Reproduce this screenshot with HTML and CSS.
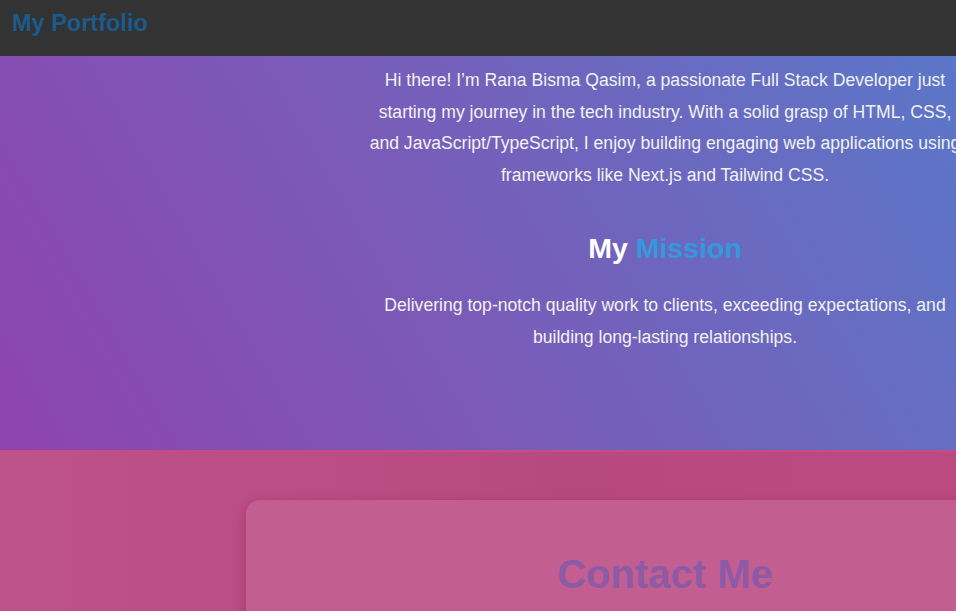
FILE: index.html
```html
<!DOCTYPE html>
<html lang="en">
<head>
<meta charset="utf-8">
<title>My Portfolio</title>
<link rel="stylesheet" href="styles.css">
</head>
<body>
<header class="topbar">
  <h1 class="logo">My Portfolio</h1>
</header>
<section class="hero">
  <div class="hero-col">
    <p class="intro">Hi there! I’m Rana Bisma Qasim, a passionate Full Stack Developer just starting my journey in the tech industry. With a solid grasp of HTML, CSS, and JavaScript/TypeScript, I enjoy building engaging web applications using frameworks like Next.js and Tailwind CSS.</p>
    <h2 class="mission-title">My <span class="accent">Mission</span></h2>
    <p class="intro">Delivering top-notch quality work to clients, exceeding expectations, and building long-lasting relationships.</p>
  </div>
</section>
<section class="contact">
  <div class="card">
    <h2 class="card-title">Contact Me</h2>
  </div>
</section>
</body>
</html>
```
FILE: styles.css
```css
* { box-sizing: border-box; }
html, body {
  margin: 0;
  padding: 0;
  width: 956px;
  height: 611px;
  overflow: hidden;
  font-family: "Liberation Sans", Arial, sans-serif;
}
.topbar {
  height: 56px;
  background: #333333;
  display: flex;
  align-items: center;
  padding: 0 12px;
}
.logo {
  margin: 0;
  font-size: 23.5px;
  font-weight: bold;
  color: #1b5b8c;
  position: relative;
  top: -5px;
}
.hero {
  height: 394px;
  background: linear-gradient(60deg, #8e44ad 0%, #7a5bb8 45%, #5b77c8 100%);
  display: flex;
  padding-left: 365px;
}
.hero-col {
  width: 600px;
  flex-shrink: 0;
  text-align: center;
  color: #f2f2f2;
  padding-top: 9px;
}
.intro {
  margin: 0;
  font-size: 17.6px;
  line-height: 31.7px;
}
.mission-title {
  margin: 38px 0 24px;
  font-size: 28.5px;
  line-height: 36px;
  color: #ffffff;
}
.accent { color: #3498db; }
.contact {
  height: 161px;
  background: linear-gradient(90deg, #be5389 0%, #b8497f 60%, #bb4a80 100%);
  border-top: 2px solid #c44d85;
  padding: 48px 0 0 246px;
  display: flex;
  overflow: hidden;
}
.card {
  width: 838px;
  flex-shrink: 0;
  height: 300px;
  background: #c25e90;
  border-radius: 14px;
  box-shadow: 0 4px 14px rgba(120, 20, 70, 0.35);
  text-align: center;
  padding-top: 52px;
}
.card-title {
  margin: 0;
  font-size: 40px;
  color: #8c5aa6;
}
```
